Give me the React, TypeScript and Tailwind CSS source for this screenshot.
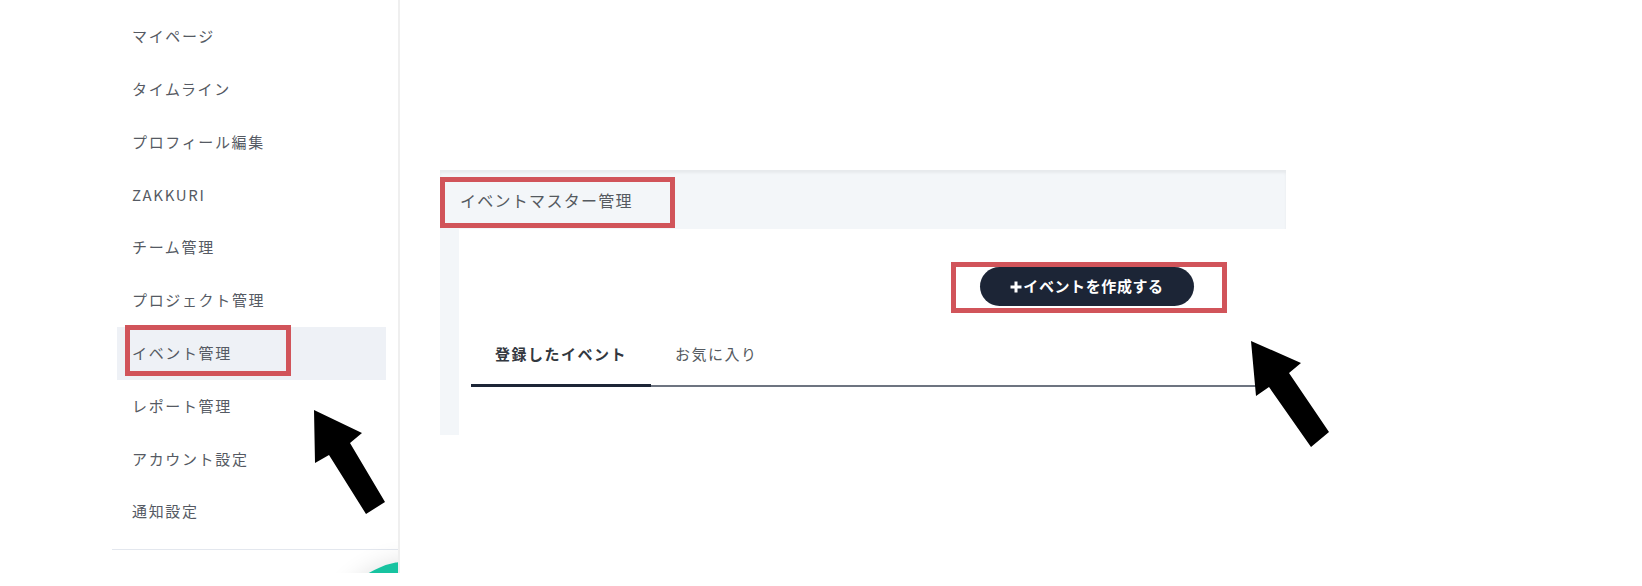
import React from 'react'

const navItems = [
  'マイページ',
  'タイムライン',
  'プロフィール編集',
  'ZAKKURI',
  'チーム管理',
  'プロジェクト管理',
  'イベント管理',
  'レポート管理',
  'アカウント設定',
  '通知設定',
]

const Sidebar: React.FC = () => {
  return (
    <aside className="relative w-[400px] h-[573px] shrink-0 overflow-hidden border-r-2 border-[#efefef] pl-[112px]">
      <nav className="pt-[10px] pl-[5px] pr-[12px]">
        {navItems.map((item) => (
          <div
            key={item}
            className={`h-[52.8px] flex items-center pl-[15px] text-[15px] tracking-[0.11em] text-[#555a63] ${
              item === 'イベント管理' ? 'bg-[#eef1f6]' : ''
            }`}
          >
            {item}
          </div>
        ))}
      </nav>
      <div className="mt-[11px] border-t border-[#e3e7ee]" />
      {/* floating button peeking in at the bottom */}
      <div className="absolute left-[328px] top-[561px] w-[168px] h-[168px] rounded-full bg-[#17c3a0] shadow-[0_0_24px_rgba(0,0,0,0.12)]" />
    </aside>
  )
}

const EventPanel: React.FC = () => {
  return (
    <section className="w-[846px]">
      <div className="h-[59px] flex items-center pl-[20px] bg-[#f3f6f9] shadow-[inset_0_3px_3px_rgba(0,0,0,0.05)]">
        <span className="text-[16px] tracking-[0.08em] text-[#555a60]">イベントマスター管理</span>
      </div>
      <div className="flex">
        <div className="w-[19px] bg-[#f3f6f9]" />
        <div className="flex-1 pt-[38px] px-[12px] pb-[48px]">
          <button className="ml-[509px] w-[214px] h-[39px] rounded-full bg-[#1c2536] text-white text-[15px] font-bold tracking-[0.04em] flex items-center justify-center">
            <svg width="12" height="12" viewBox="0 0 12 12" className="mr-[1px]">
              <path d="M6 0.5v11M0.5 6h11" stroke="#fff" strokeWidth="3" />
            </svg>
            イベントを作成する
          </button>
          <div className="mt-[18px] flex border-b-2 border-[#6d7480]">
            <div className="h-[63px] -mb-[2px] px-[24px] flex items-center border-b-[3px] border-[#1c2536] text-[15px] font-bold tracking-[0.1em] text-[#333840]">
              登録したイベント
            </div>
            <div className="h-[63px] -mb-[2px] px-[24px] flex items-center border-b-[3px] border-transparent text-[15px] tracking-[0.1em] text-[#555a60]">
              お気に入り
            </div>
          </div>
        </div>
      </div>
    </section>
  )
}

const App: React.FC = () => {
  return (
    <div className="relative w-[1642px] h-[586px] overflow-hidden bg-white font-['Noto_Sans_CJK_JP','Noto_Sans',sans-serif]">
      <div className="flex items-start">
        <Sidebar />
        <main className="pl-[40px] pt-[170px]">
          <EventPanel />
        </main>
      </div>

      {/* annotation boxes */}
      <div className="absolute left-[125px] top-[325px] w-[166px] h-[51px] border-[5px] border-[#d1545a]" />
      <div className="absolute left-[440px] top-[177px] w-[235px] h-[51px] border-[5px] border-[#d1545a]" />
      <div className="absolute left-[951px] top-[262px] w-[276px] h-[51px] border-[5px] border-[#d1545a]" />

      {/* annotation arrows */}
      <svg className="absolute left-0 top-0" width="1642" height="586" viewBox="0 0 1642 586">
        <polygon points="314,410 362,433 350,443 385,502 366,514 329,455 315,463" fill="#000" />
        <polygon points="1251,341 1301,363 1289,373 1329,432 1311,447 1269,387 1256,396" fill="#000" />
      </svg>
    </div>
  )
}

export default App
